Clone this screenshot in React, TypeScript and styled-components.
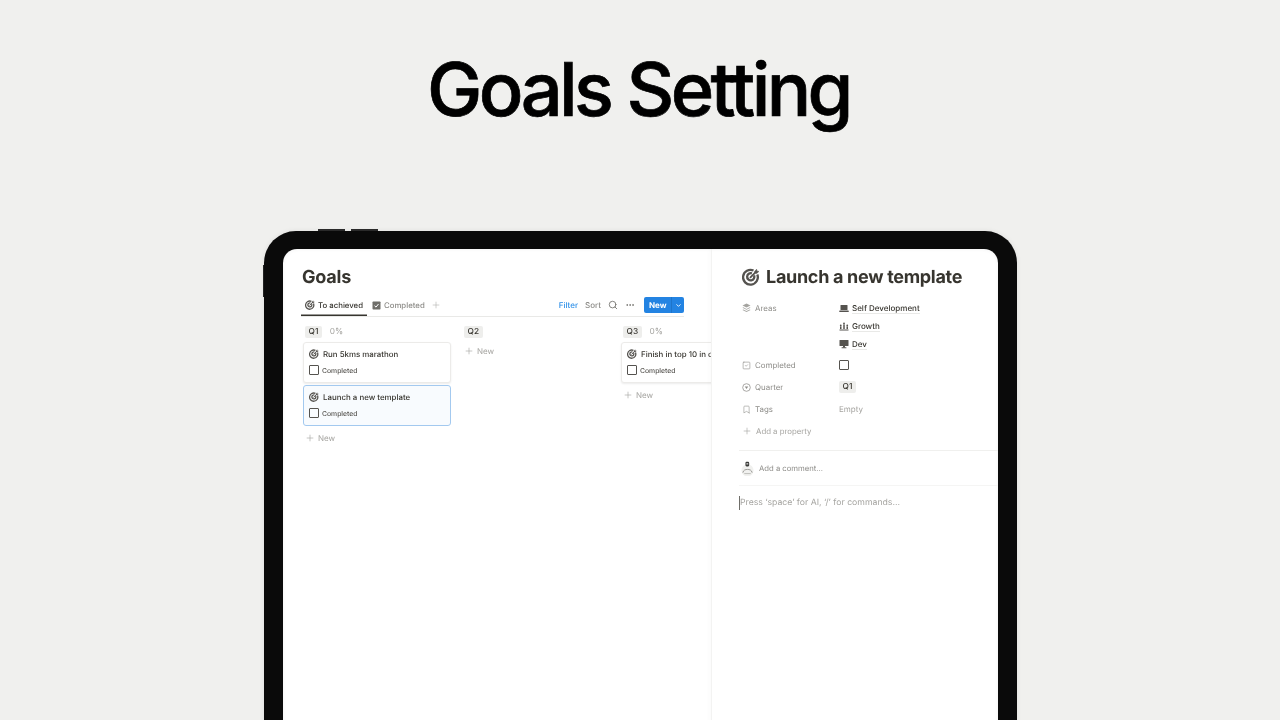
import styled, { createGlobalStyle } from 'styled-components'
import { Plus, Search, MoreHorizontal, ChevronDown, Bookmark, SquareCheck } from 'lucide-react'

const GlobalStyle = createGlobalStyle`
    html, body {
        margin: 0;
        padding: 0;
        background: #f0f0ee;
    }
    body {
        font-family: Inter, "Liberation Sans", sans-serif;
        text-rendering: geometricPrecision;
    }
`

const TargetIcon = ({ size = 10 }: { size?: number }) => (
    <svg width={size} height={size} viewBox="0 0 20 20" fill="none" stroke="#55534f" style={{ flexShrink: 0 }}>
        <path d="M17 7.2A8.2 8.2 0 1 1 12.8 2.8" strokeWidth="2.6" />
        <path d="M13.4 8.2A4 4 0 1 1 11 6" strokeWidth="2.6" />
        <path d="M9.4 10.4 15.2 4.6" strokeWidth="2" strokeLinecap="round" />
        <path d="M14 3.8 16.2 1.4 16.6 3.4 18.8 3.8 16.4 6 14.4 5.6Z" fill="#55534f" strokeWidth="0.6" />
    </svg>
)

const TabCheckIcon = () => (
    <svg width="9" height="9" viewBox="0 0 18 18">
        <rect x="1" y="1" width="16" height="16" rx="1.5" fill="#6f6e69" />
        <path d="M5 9.4 8 12.2 13 6" fill="none" stroke="#fff" strokeWidth="2" />
    </svg>
)

const LayersIcon = () => (
    <svg width="9" height="10" viewBox="0 0 18 20" fill="#a5a4a0">
        <path d="M9 1 17 5 9 9 1 5Z" />
        <path d="M2.5 8.6 9 11.8 15.5 8.6 17 9.6 9 13.6 1 9.6Z" />
        <path d="M2.5 13 9 16.2 15.5 13 17 14 9 18 1 14Z" />
    </svg>
)

const QuarterIcon = () => (
    <svg width="9" height="9" viewBox="0 0 18 18" fill="none">
        <circle cx="9" cy="9" r="7.6" stroke="#8d8c88" strokeWidth="1.5" />
        <path d="M5.5 7h7L9 12Z" fill="#8d8c88" />
    </svg>
)

const LaptopIcon = () => (
    <svg width="10" height="9" viewBox="0 0 20 18" fill="#55534f">
        <rect x="3" y="2" width="14" height="10" rx="1" />
        <rect x="0.5" y="13" width="19" height="3" rx="1" />
    </svg>
)

const GrowthIcon = () => (
    <svg width="10" height="10" viewBox="0 0 20 20" fill="#55534f">
        <rect x="1" y="17" width="18" height="2" />
        <circle cx="3.5" cy="9" r="1.8" />
        <rect x="2" y="11" width="3" height="5" />
        <circle cx="10" cy="5" r="1.8" />
        <rect x="8.5" y="7" width="3" height="9" />
        <circle cx="16.5" cy="9" r="1.8" />
        <rect x="15" y="11" width="3" height="5" />
    </svg>
)

const MonitorIcon = () => (
    <svg width="10" height="10" viewBox="0 0 20 20" fill="#55534f">
        <rect x="1" y="2" width="18" height="12" rx="1" />
        <rect x="8" y="14" width="4" height="3" />
        <rect x="5" y="16.5" width="10" height="2" rx="1" />
    </svg>
)

const AvatarIcon = () => (
    <svg width="13" height="15" viewBox="0 0 14 16" fill="none">
        <circle cx="7" cy="10" r="6.5" fill="#f1f1ef" />
        <rect x="4.8" y="0.8" width="4" height="5" rx="1.2" fill="#3a3a38" />
        <rect x="5.8" y="2.4" width="2" height="1.2" fill="#f1f1ef" />
        <path d="M2 12.5C2.5 9.5 5 9 7 9s4.5.5 5 3.5" stroke="#8d8c88" strokeWidth="0.9" />
        <path d="M3.5 13.5h7" stroke="#b5b4b0" strokeWidth="0.9" />
    </svg>
)

const quarters = [
    { id: 'Q1', percent: '0%', cards: [{ title: 'Run 5kms marathon' }, { title: 'Launch a new template', selected: true }] },
    { id: 'Q2', cards: [] },
    { id: 'Q3', percent: '0%', cards: [{ title: 'Finish in top 10 in competition' }] },
]

const App = () => {
    return <Page>
        <GlobalStyle />
        <Heading>Goals Setting</Heading>
        <Device>
            <TopButton />
            <TopButton />
            <SideButton />
            <Screen>
                <Board>
                    <BoardTitle>Goals</BoardTitle>
                    <Toolbar>
                        <Tab $active>
                            <TargetIcon />
                            To achieved
                        </Tab>
                        <Tab>
                            <TabCheckIcon />
                            Completed
                        </Tab>
                        <AddView><Plus size={10} color="#b5b4b0" strokeWidth={1.5} /></AddView>
                        <Actions>
                            <ActionLabel $blue>Filter</ActionLabel>
                            <ActionLabel>Sort</ActionLabel>
                            <Search size={10} color="#6f6e69" strokeWidth={2} />
                            <MoreHorizontal size={10} color="#6f6e69" strokeWidth={2} />
                            <NewButton>
                                <NewLabel>New</NewLabel>
                                <NewCaret><ChevronDown size={7} color="#fff" strokeWidth={3} /></NewCaret>
                            </NewButton>
                        </Actions>
                    </Toolbar>
                    <Columns>
                        {quarters.map(q => <Column key={q.id}>
                            <ColumnHead>
                                <QuarterTag>{q.id}</QuarterTag>
                                {q.percent && <Percent>{q.percent}</Percent>}
                            </ColumnHead>
                            {q.cards.map(c => <Card key={c.title} $selected={c.selected}>
                                <CardTitle>
                                    <TargetIcon />
                                    <CardText>{c.title}</CardText>
                                </CardTitle>
                                <CardCheck>
                                    <Checkbox />
                                    Completed
                                </CardCheck>
                            </Card>)}
                            <AddNew>
                                <Plus size={10} color="#a5a4a0" strokeWidth={1.5} />
                                New
                            </AddNew>
                        </Column>)}
                    </Columns>
                </Board>
                <Detail>
                    <DetailTitle>
                        <TargetIcon size={18} />
                        Launch a new template
                    </DetailTitle>
                    <Properties>
                        <AreasProperty>
                            <PropLabel><LayersIcon />Areas</PropLabel>
                            <AreaList>
                                <AreaLink><LaptopIcon /><AreaText>Self Development</AreaText></AreaLink>
                                <AreaLink><GrowthIcon /><AreaText>Growth</AreaText></AreaLink>
                                <AreaLink><MonitorIcon /><AreaText>Dev</AreaText></AreaLink>
                            </AreaList>
                        </AreasProperty>
                        <Property>
                            <PropLabel><SquareCheck size={9} color="#8d8c88" strokeWidth={1.6} />Completed</PropLabel>
                            <PropValue><Checkbox /></PropValue>
                        </Property>
                        <Property>
                            <PropLabel><QuarterIcon />Quarter</PropLabel>
                            <PropValue><QuarterTag>Q1</QuarterTag></PropValue>
                        </Property>
                        <Property>
                            <PropLabel><Bookmark size={9} color="#8d8c88" strokeWidth={1.5} />Tags</PropLabel>
                            <PropValue><Empty>Empty</Empty></PropValue>
                        </Property>
                        <Property>
                            <AddProperty><Plus size={10} color="#a5a4a0" strokeWidth={1.5} />Add a property</AddProperty>
                        </Property>
                    </Properties>
                    <CommentRow>
                        <AvatarIcon />
                        Add a comment...
                    </CommentRow>
                    <Editor>Press ‘space’ for AI, ‘/’ for commands...</Editor>
                </Detail>
            </Screen>
        </Device>
    </Page>
}

export default App

const Page = styled.div`
    width: 1280px;
    height: 720px;
    overflow: hidden;
    background: #f0f0ee;
    display: flex;
    flex-direction: column;
    align-items: center;
`
const Heading = styled.h1`
    margin: 0 3px 0 0;
    flex-shrink: 0;
    height: 231px;
    padding-top: 43px;
    box-sizing: border-box;
    font-size: 74px;
    line-height: 92px;
    font-weight: 500;
    -webkit-text-stroke: 0.7px #000;
    letter-spacing: -3.6px;
    color: #000;
`
const Device = styled.div`
    position: relative;
    flex-shrink: 0;
    width: 753px;
    height: 560px;
    box-sizing: border-box;
    padding: 18px 19px 0 19px;
    margin-left: 1px;
    background: #0a0a0a;
    border-radius: 32px 32px 0 0;
    box-shadow: 0 0 5px rgba(0, 0, 0, 0.08);
`
const TopButton = styled.span`
    position: absolute;
    top: -2px;
    left: 54px;
    width: 27px;
    height: 2px;
    background: #2a2a2a;
    & + & {
        left: 87px;
    }
`
const SideButton = styled.span`
    position: absolute;
    left: -1px;
    top: 34px;
    width: 1px;
    height: 32px;
    background: #222;
`
const Screen = styled.div`
    display: flex;
    height: 100%;
    background: #fff;
    border-radius: 14px 14px 0 0;
    overflow: hidden;
    box-shadow: inset 0 0 4px rgba(0, 0, 0, 0.06);
`
const Board = styled.section`
    width: 428px;
    flex-shrink: 0;
    box-sizing: border-box;
    padding: 18px 0 0 19px;
    overflow: hidden;
    will-change: transform;
    filter: blur(0.35px);
`
const BoardTitle = styled.h2`
    margin: 0;
    font-size: 18px;
    line-height: 22px;
    font-weight: 700;
    letter-spacing: -0.2px;
    color: #37352f;
`
const Toolbar = styled.div`
    display: flex;
    align-items: center;
    width: 383px;
    height: 22px;
    margin-top: 5px;
    margin-left: -1px;
    border-bottom: 1px solid #e9e9e7;
`
const Tab = styled.div<{ $active?: boolean }>`
    display: flex;
    align-items: center;
    gap: 3px;
    height: 100%;
    box-sizing: content-box;
    padding: 0 4px;
    margin-right: 1px;
    font-size: 7.8px;
    font-weight: 500;
    color: ${p => (p.$active ? '#37352f' : '#8d8c88')};
    box-shadow: ${p => (p.$active ? 'inset 0 -1.5px 0 #37352f' : 'none')};
`
const AddView = styled.span`
    display: flex;
    margin-left: 1px;
`
const Actions = styled.div`
    display: flex;
    align-items: center;
    gap: 7px;
    margin-left: auto;
`
const ActionLabel = styled.span<{ $blue?: boolean }>`
    font-size: 8px;
    font-weight: 500;
    color: ${p => (p.$blue ? '#2e90e8' : '#8d8c88')};
`
const NewButton = styled.div`
    display: flex;
    height: 16px;
    margin-left: 2px;
    border-radius: 2px;
    background: #2383e2;
    overflow: hidden;
`
const NewLabel = styled.span`
    display: flex;
    align-items: center;
    width: 27px;
    box-sizing: border-box;
    padding-left: 5px;
    font-size: 8px;
    font-weight: 700;
    color: #fff;
`
const NewCaret = styled.span`
    display: flex;
    align-items: center;
    justify-content: center;
    width: 13px;
    box-sizing: border-box;
    border-left: 1px solid #1e74c9;
`
const Columns = styled.div`
    display: flex;
    gap: 11px;
    margin-top: 8px;
    margin-left: 1px;
    width: 480px;
`
const Column = styled.div`
    width: 148px;
    flex-shrink: 0;
`
const ColumnHead = styled.div`
    display: flex;
    align-items: center;
    gap: 8px;
    height: 14px;
    padding-left: 2px;
    margin-bottom: 3px;
`
const QuarterTag = styled.span`
    display: inline-flex;
    align-items: center;
    height: 12px;
    padding: 0 3.5px;
    border-radius: 2px;
    background: #eeeeec;
    font-size: 8.3px;
    font-weight: 500;
    color: #37352f;
`
const Percent = styled.span`
    font-size: 8.3px;
    color: #a5a4a0;
`
const Card = styled.div<{ $selected?: boolean }>`
    box-sizing: border-box;
    width: 148px;
    height: 41px;
    margin-bottom: 2px;
    padding: 5px 5px 0;
    border-radius: 3px;
    background: ${p => (p.$selected ? '#f8fbfe' : '#fff')};
    border: 1px solid ${p => (p.$selected ? '#a3c9ef' : '#ecebe9')};
    box-shadow: ${p => (p.$selected ? 'none' : '0 1px 2px rgba(15, 15, 15, 0.08)')};
`
const CardTitle = styled.div`
    display: flex;
    align-items: center;
    gap: 4px;
    height: 11px;
    font-size: 7.9px;
    font-weight: 500;
    color: #37352f;
`
const CardText = styled.span`
    white-space: nowrap;
`
const CardCheck = styled.div`
    display: flex;
    align-items: center;
    gap: 3px;
    margin-top: 6px;
    font-size: 6.8px;
    font-weight: 500;
    color: #55534f;
`
const Checkbox = styled.span`
    display: inline-block;
    box-sizing: border-box;
    width: 10px;
    height: 10px;
    border: 1px solid #55534f;
    border-radius: 1px;
`
const AddNew = styled.div`
    display: flex;
    align-items: center;
    gap: 3px;
    height: 14px;
    margin-top: 5px;
    padding-left: 2px;
    font-size: 8px;
    color: #a5a4a0;
`
const Detail = styled.section`
    flex: 1;
    min-width: 0;
    box-sizing: border-box;
    padding: 17px 0 0 30px;
    border-left: 1px solid #f3f3f2;
    box-shadow: -2px 0 4px rgba(15, 15, 15, 0.02);
    will-change: transform;
    filter: blur(0.35px);
`
const DetailTitle = styled.h2`
    display: flex;
    align-items: center;
    gap: 6px;
    margin: 0;
    height: 22px;
    font-size: 18px;
    font-weight: 700;
    letter-spacing: -0.3px;
    white-space: nowrap;
    color: #37352f;
`
const Properties = styled.div`
    display: flex;
    flex-direction: column;
    margin-top: 13px;
`
const Property = styled.div`
    display: flex;
    min-height: 22px;
    align-items: flex-start;
`
const AreasProperty = styled(Property)`
    margin-bottom: 7px;
`
const PropLabel = styled.div`
    display: flex;
    align-items: center;
    gap: 4px;
    width: 97px;
    height: 14px;
    flex-shrink: 0;
    font-size: 7.9px;
    color: #8d8c88;
`
const PropValue = styled.div`
    display: flex;
    align-items: center;
    height: 14px;
`
const AreaList = styled.div`
    display: flex;
    flex-direction: column;
    gap: 4px;
`
const AreaLink = styled.div`
    display: flex;
    align-items: center;
    gap: 3px;
    height: 14px;
`
const AreaText = styled.span`
    font-size: 8px;
    font-weight: 500;
    color: #37352f;
    border-bottom: 1px solid #e9e9e7;
    line-height: 10px;
`
const Empty = styled.span`
    font-size: 8px;
    color: #a5a4a0;
`
const AddProperty = styled.div`
    display: flex;
    align-items: center;
    gap: 4px;
    height: 14px;
    font-size: 7.8px;
    color: #a5a4a0;
`
const CommentRow = styled.div`
    display: flex;
    align-items: center;
    gap: 5px;
    height: 34px;
    margin-top: 4px;
    margin-left: -3px;
    padding-left: 2px;
    font-size: 7.7px;
    color: #8d8c88;
    border-top: 1px solid #f0f0ee;
    border-bottom: 1px solid #f5f5f4;
`
const Editor = styled.div`
    margin-top: 10px;
    margin-left: -3px;
    height: 14px;
    line-height: 14px;
    font-size: 8.7px;
    color: #a5a4a0;
    border-left: 1px solid #6f6e69;
`
